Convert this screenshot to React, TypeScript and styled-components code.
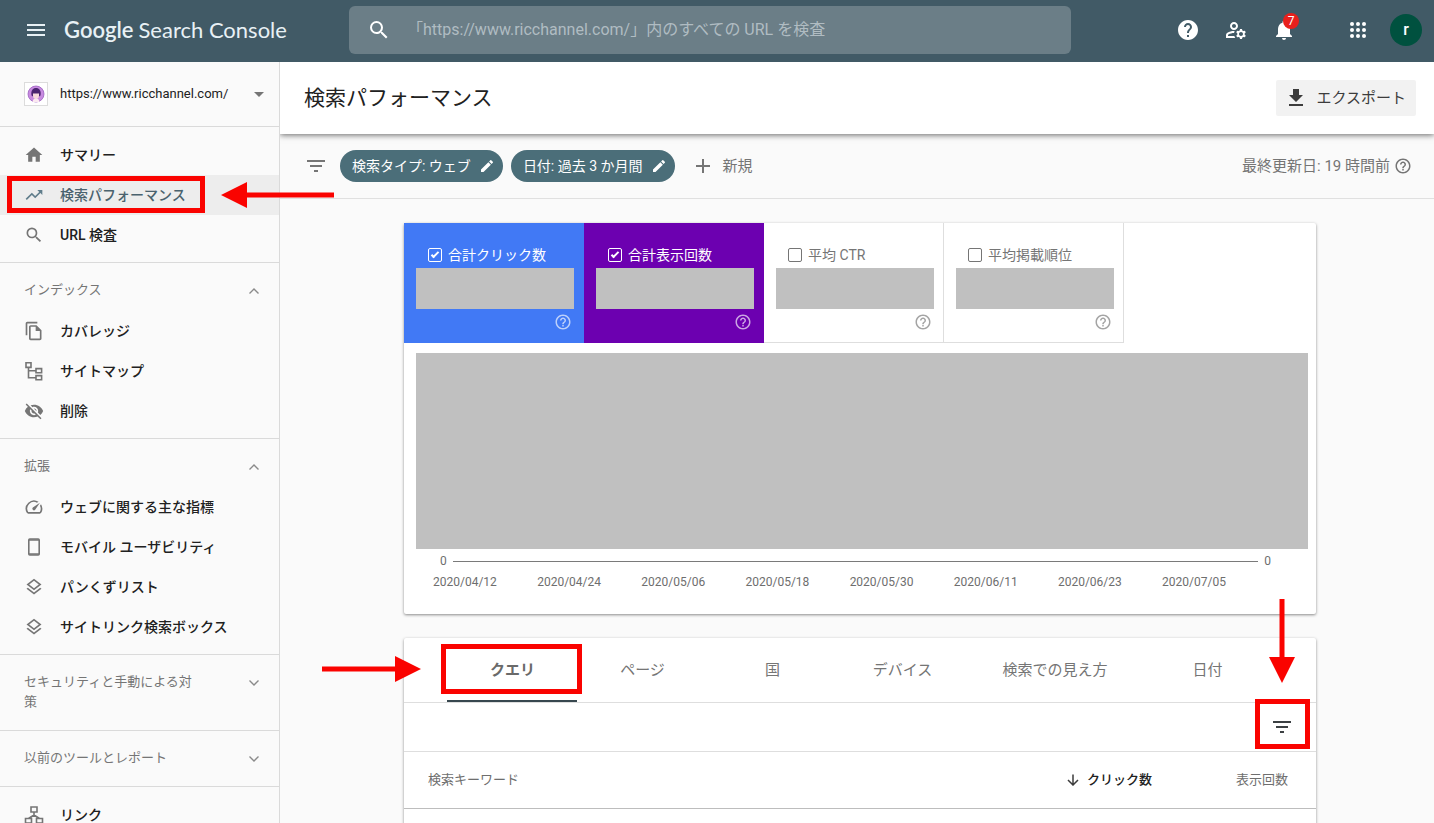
import React from "react";
import styled, { createGlobalStyle, css } from "styled-components";
import {
  MdAdd,
  MdArrowDropDown,
  MdEdit,
  MdFileDownload,
  MdFilterList,
  MdHelp,
  MdHelpOutline,
  MdHome,
  MdMenu,
  MdNotifications,
  MdOutlineFileCopy,
  MdOutlineLayers,
  MdOutlineManageAccounts,
  MdOutlineSpeed,
  MdSearch,
  MdTrendingUp,
  MdVisibilityOff,
} from "react-icons/md";

const GlobalStyle = createGlobalStyle`
  *, *::before, *::after { box-sizing: border-box; }
  body {
    margin: 0;
    background: #fafafa;
    color: #212121;
    font-family: Roboto, "Noto Sans CJK JP", sans-serif;
    font-size: 14px;
    line-height: 20px;
  }
  button, input, select { font: inherit; color: inherit; }
  button { border: 0; background: none; padding: 0; cursor: pointer; }
  svg { display: block; flex: none; }
`;

const RED = "#fa0300";

/* ---------- shell ---------- */

const Shell = styled.div`
  display: flex;
  flex-direction: column;
  height: 100vh;
  overflow: hidden;
`;

const TopBar = styled.header`
  display: flex;
  align-items: center;
  flex: none;
  height: 62px;
  padding-bottom: 2px;
  background: #415a66;
  color: #fff;
`;

const Brand = styled.div`
  display: flex;
  align-items: center;
  flex: none;
  width: 349px;
  padding-left: 24px;
  gap: 16px;
  color: #e8f1f5;
`;

const MenuButton = styled.button`
  display: flex;
  color: inherit;
`;

const Logo = styled.a`
  display: flex;
  align-items: baseline;
  gap: 5px;
  color: inherit;
  text-decoration: none;
  font-family: Lato, sans-serif;
  font-size: 22px;
  line-height: 32px;
  white-space: nowrap;
`;

const LogoStrong = styled.span`
  font-weight: 600;
`;

const SearchForm = styled.form`
  display: flex;
  align-items: center;
  flex: 1;
  height: 48px;
  padding: 0 18px;
  gap: 16px;
  border-radius: 6px;
  background: #6b7e87;
`;

const SearchInput = styled.input`
  flex: 1;
  min-width: 0;
  height: 40px;
  border: 0;
  padding: 0 0 2px;
  outline: 0;
  background: transparent;
  font-size: 16px;
  &::placeholder { color: #b0bcc2; opacity: 1; }
`;

const Tools = styled.div`
  display: flex;
  align-items: center;
  justify-content: flex-end;
  flex: none;
  width: 363px;
  padding-right: 12px;
  gap: 8px;
`;

const IconButton = styled.button<{ $dark?: boolean }>`
  position: relative;
  display: flex;
  align-items: center;
  justify-content: center;
  width: 40px;
  height: 40px;
  color: ${(p) => (p.$dark ? "#3c4043" : "#fff")};
`;

const Badge = styled.span`
  position: absolute;
  top: 3px;
  right: 5px;
  width: 16px;
  height: 16px;
  border-radius: 8px;
  background: #e8201c;
  font-size: 12px;
  line-height: 16px;
  text-align: center;
`;

const Account = styled.div`
  display: flex;
  align-items: center;
  gap: 12px;
  margin-left: 26px;
`;

const Avatar = styled.button`
  width: 32px;
  height: 32px;
  border-radius: 50%;
  background: #00513f;
  color: #fff;
  font-size: 16px;
  font-weight: 500;
`;

const Body = styled.div`
  position: relative;
  display: flex;
  flex: 1;
  min-height: 0;
`;

/* ---------- side navigation ---------- */

const Sidebar = styled.nav`
  flex: none;
  width: 280px;
  overflow-y: auto;
  scrollbar-width: none;
  border-right: 1px solid #dadada;
  background: #fafafa;
`;

const Property = styled.label`
  position: relative;
  display: flex;
  align-items: center;
  height: 65px;
  padding: 0 8px 0 24px;
  gap: 12px;
  border-bottom: 1px solid #dadada;
`;

const Favicon = styled.span`
  display: flex;
  align-items: center;
  justify-content: center;
  width: 24px;
  height: 24px;
  border: 1px solid #dcdcdc;
  background: #fff;
`;

const PropertySelect = styled.select`
  flex: 1;
  min-width: 0;
  appearance: none;
  border: 0;
  padding: 0;
  background: transparent;
  font-size: 13px;
`;

const Group = styled.section`
  padding: 8px 0 7px;
  border-bottom: 1px solid #dadada;
`;

const FoldGroup = styled.section<{ $open: boolean }>`
  padding-bottom: ${(p) => (p.$open ? 7 : 0)}px;
  border-bottom: 1px solid #dadada;
`;

const FoldButton = styled.button<{ $open: boolean }>`
  display: flex;
  align-items: flex-start;
  justify-content: space-between;
  width: 100%;
  padding: ${(p) => (p.$open ? "17px 19px 11px 24px" : "17px 19px 18px 24px")};
  color: #757575;
  font-size: 13px;
  line-height: 20px;
  text-align: left;
`;

const FoldLabel = styled.span`
  width: 170px;
`;

const Chevron = styled.svg`
  margin-top: 5px;
`;

const NavLink = styled.a<{ $active?: boolean }>`
  position: relative;
  display: flex;
  align-items: center;
  height: 40px;
  padding-left: 24px;
  gap: 16px;
  color: #212121;
  font-weight: 500;
  text-decoration: none;
  svg { color: #757575; }
  ${(p) =>
    p.$active &&
    css`
      background: #ededed;
      color: #4a626e;
      svg { color: #607d8b; }
    `}
`;

/* ---------- main column ---------- */

const Main = styled.main`
  display: flex;
  flex-direction: column;
  flex: 1;
  min-width: 0;
  overflow: hidden;
`;

const TitleBar = styled.div`
  position: relative;
  z-index: 1;
  display: flex;
  align-items: center;
  justify-content: space-between;
  flex: none;
  height: 72px;
  padding: 0 18px 0 24px;
  background: #fff;
  box-shadow: 0 1px 6px rgba(0, 0, 0, 0.6);
`;

const Title = styled.h1`
  margin: 0;
  font-size: 21px;
  font-weight: 400;
  line-height: 28px;
`;

const ExportButton = styled.button`
  display: flex;
  align-items: center;
  height: 36px;
  padding: 0 10px 0 8px;
  gap: 8px;
  border-radius: 2px;
  background: #f2f2f2;
  color: #3c3c3c;
  font-size: 15px;
`;

const FilterBar = styled.div`
  display: flex;
  align-items: center;
  flex: none;
  height: 65px;
  padding: 0 22px 0 24px;
  gap: 8px;
  border-bottom: 1px solid #e0e0e0;
  color: #757575;
`;

const FilterMark = styled.span`
  margin-right: 4px;
`;

const Chip = styled.button`
  display: flex;
  align-items: center;
  height: 32px;
  padding: 0 8px 0 12px;
  gap: 8px;
  border-radius: 16px;
  background: #4b6e79;
  color: #fff;
  white-space: nowrap;
`;

const AddFilter = styled.button`
  display: flex;
  align-items: center;
  margin-left: 8px;
  gap: 8px;
  font-size: 15px;
  white-space: nowrap;
`;

const Updated = styled.span`
  display: flex;
  align-items: center;
  margin-left: auto;
  gap: 4px;
  font-size: 15px;
  white-space: nowrap;
`;

const Content = styled.div`
  flex: 1;
  min-height: 0;
  padding: 24px 118px 24px 124px;
  overflow-y: auto;
  scrollbar-width: none;
`;

const Card = styled.section`
  margin-bottom: 24px;
  border-radius: 2px;
  background: #fff;
  box-shadow: 0 1px 3px rgba(0, 0, 0, 0.45);
`;

/* ---------- performance card ---------- */

const Metrics = styled.div`
  display: flex;
`;

const Metric = styled.div<{ $tone?: string }>`
  display: flex;
  flex-direction: column;
  width: 180px;
  height: 120px;
  padding: 22px 12px 0;
  color: #757575;
  ${(p) =>
    p.$tone
      ? css`
          background: ${p.$tone};
          color: #fff;
        `
      : css`
          box-shadow: inset -1px -1px 0 #dedede;
        `}
`;

const MetricLabel = styled.label`
  display: flex;
  align-items: center;
  height: 20px;
  padding-left: 12px;
  gap: 6px;
`;

const Tick = styled.input`
  position: relative;
  appearance: none;
  width: 14px;
  height: 14px;
  margin: 0;
  border: 1px solid currentColor;
  border-radius: 2px;
  &:checked::after {
    content: "";
    position: absolute;
    left: 4px;
    top: 1px;
    width: 4px;
    height: 8px;
    border: solid currentColor;
    border-width: 0 2px 2px 0;
    transform: rotate(45deg);
  }
`;

const Mask = styled.div`
  flex: none;
  height: 41px;
  margin: 3px -2px 4px 0;
  background: #c0c0c0;
`;

const MetricHelp = styled.button`
  align-self: flex-end;
  opacity: 0.65;
`;

const Chart = styled.div`
  padding: 10px 8px 22px 12px;
  color: #6e6e6e;
  font-size: 12px;
`;

const ChartMask = styled.div`
  height: 196px;
  background: #c0c0c0;
`;

const Axis = styled.div`
  display: flex;
  align-items: center;
  height: 24px;
  padding: 0 37px 0 24px;
  gap: 6px;
`;

const AxisLine = styled.span`
  flex: 1;
  height: 1px;
  background: #7a7a7a;
`;

const Dates = styled.div`
  display: flex;
  justify-content: space-between;
  padding: 0 82px 0 17px;
  line-height: 19px;
`;

/* ---------- dimension table ---------- */

const Tabs = styled.div`
  display: flex;
  justify-content: center;
  height: 65px;
  border-bottom: 1px solid #dedede;
`;

const Tab = styled.button<{ $active?: boolean }>`
  position: relative;
  min-width: 130px;
  height: 64px;
  padding: 0 35px;
  color: #757575;
  font-size: 15px;
  white-space: nowrap;
  ${(p) =>
    p.$active &&
    css`
      color: #6a6a6a;
      font-weight: 700;
      box-shadow: inset 0 -2px 0 #37474f;
    `}
`;

const TableTools = styled.div`
  display: flex;
  align-items: center;
  justify-content: flex-end;
  height: 49px;
  padding-right: 14px;
  border-bottom: 1px solid #dedede;
`;

const TableArea = styled.div`
  padding-bottom: 48px;
`;

const Table = styled.table`
  width: 100%;
  border-spacing: 0;
`;

const Th = styled.th<{ $end?: boolean; $sorted?: boolean }>`
  height: 57px;
  width: ${(p) => (p.$end ? "136px" : "auto")};
  padding: 0 ${(p) => (p.$end ? 28 : 24)}px 0 ${(p) => (p.$end ? 0 : 24)}px;
  border-bottom: 1px solid #bdbdbd;
  color: ${(p) => (p.$sorted ? "#212121" : "#6e6e6e")};
  font-size: 13px;
  font-weight: ${(p) => (p.$sorted ? 500 : 400)};
  text-align: ${(p) => (p.$end ? "right" : "left")};
  white-space: nowrap;
`;

const SortButton = styled.button`
  display: inline-flex;
  align-items: center;
  gap: 8px;
  font-weight: inherit;
  vertical-align: middle;
`;

/* ---------- annotations laid over the page ---------- */

const Outline = styled.span<{ $top: number; $left: number; $w: number; $h: number }>`
  position: absolute;
  z-index: 2;
  top: ${(p) => p.$top}px;
  left: ${(p) => p.$left}px;
  width: ${(p) => p.$w}px;
  height: ${(p) => p.$h}px;
  border: 5px solid ${RED};
  pointer-events: none;
`;

const Pointer = styled.svg<{ $top: number; $left: number }>`
  position: absolute;
  z-index: 3;
  top: ${(p) => p.$top}px;
  left: ${(p) => p.$left}px;
  pointer-events: none;
  && { color: ${RED}; }
`;

/* ---------- drawings ---------- */

const Stroke = ({ children }: { children: React.ReactNode }) => (
  <svg width="20" height="20" viewBox="0 0 20 20" fill="none" stroke="currentColor" strokeWidth="1.6" aria-hidden="true">
    {children}
  </svg>
);

const SitemapIcon = () => (
  <Stroke>
    <path d="M2 1.8h5v4.6H2zM12 7.6h5.6v4.2H12zM12 14.600h5.600v4.200H12zM4.500 6.400v10.300H12M4.500 9.700H12" />
  </Stroke>
);

const PhoneIcon = () => (
  <Stroke>
    <rect x="4.800" y="2" width="10.400" height="16" rx="1" />
    <path d="M5 3h10M5 17h10" />
  </Stroke>
);

const LinksIcon = () => (
  <Stroke>
    <path d="M7 2h6v5H7zM1.500 13.500h6V18h-6zM12.500 13.500h6V18h-6zM10 7v3.200M4.500 13.500L10 10l5.500 3.500" />
  </Stroke>
);

const AppsIcon = () => (
  <svg width="24" height="24" viewBox="0 0 24 24" fill="currentColor" aria-hidden="true">
    {[6, 12, 18].map((y) => [6, 12, 18].map((x) => <circle key={`${x}-${y}`} cx={x} cy={y} r="2" />))}
  </svg>
);

const FoldIcon = ({ open }: { open: boolean }) => (
  <Chevron width="12" height="12" viewBox="0 0 12 12" fill="none" stroke="#8a8a8a" strokeWidth="1.4" aria-hidden="true">
    <path d={open ? "M1.5 8.5L6 4l4.500 4.500" : "M1.500 3.500L6 8l4.500-4.500"} />
  </Chevron>
);

const SortDownIcon = () => (
  <svg width="12" height="12" viewBox="0 0 12 12" fill="none" stroke="#3c3c3c" strokeWidth="1.5" aria-hidden="true">
    <path d="M6 .5v10.300M1 6l5 5 5-5" />
  </svg>
);

const FaceIcon = () => (
  <svg width="18" height="18" viewBox="0 0 18 18" aria-hidden="true">
    <circle cx="9" cy="9" r="8" fill="#c88be0" stroke="#9a5fc0" strokeWidth=".8" />
    <path d="M4.500 10.500C3.500 5.500 6 3 9 3s5.500 2.500 4.500 7.500l-1.500 1H6z" fill="#4a2470" />
    <path d="M6 8.500h6v2.500c0 2-1.500 3-3 3s-3-1-3-3z" fill="#f7d9dc" />
    <path d="M5.500 17c.3-2.500 1.600-3.400 3.500-3.400s3.200.9 3.500 3.400z" fill="#fbe9f0" />
  </svg>
);

const indexLinks = [
  { label: "カバレッジ", icon: <MdOutlineFileCopy size={20} /> },
  { label: "サイトマップ", icon: <SitemapIcon /> },
  { label: "削除", icon: <MdVisibilityOff size={20} /> },
];

const enhancementLinks = [
  { label: "ウェブに関する主な指標", icon: <MdOutlineSpeed size={20} /> },
  { label: "モバイル ユーザビリティ", icon: <PhoneIcon /> },
  { label: "パンくずリスト", icon: <MdOutlineLayers size={20} /> },
  { label: "サイトリンク検索ボックス", icon: <MdOutlineLayers size={20} /> },
];

const metrics = [
  { label: "合計クリック数", tone: "#4179f5" },
  { label: "合計表示回数", tone: "#6c00b0" },
  { label: "平均 CTR" },
  { label: "平均掲載順位" },
];

const dates = [
  "2020/04/12",
  "2020/04/24",
  "2020/05/06",
  "2020/05/18",
  "2020/05/30",
  "2020/06/11",
  "2020/06/23",
  "2020/07/05",
];

const tabs = ["クエリ", "ページ", "国", "デバイス", "検索での見え方", "日付"];

type LinkItem = { label: string; icon: React.ReactNode };

function NavFold({ title, links }: { title: string; links?: LinkItem[] }) {
  const open = Boolean(links);
  return (
    <FoldGroup $open={open}>
      <FoldButton $open={open} aria-expanded={open}>
        <FoldLabel>{title}</FoldLabel>
        <FoldIcon open={open} />
      </FoldButton>
      {links?.map((l) => (
        <NavLink key={l.label} href="#">
          {l.icon}
          {l.label}
        </NavLink>
      ))}
    </FoldGroup>
  );
}

export default function App() {
  return (
    <>
      <GlobalStyle />
      <Shell>
        <TopBar>
          <Brand>
            <MenuButton aria-label="メニュー">
              <MdMenu size={24} />
            </MenuButton>
            <Logo href="#">
              <LogoStrong>Google</LogoStrong>
              <span>Search Console</span>
            </Logo>
          </Brand>
          <SearchForm role="search">
            <MdSearch size={24} />
            <SearchInput
              type="text"
              aria-label="URL 検査"
              placeholder="「https://www.ricchannel.com/」内のすべての URL を検査"
            />
          </SearchForm>
          <Tools>
            <IconButton aria-label="ヘルプ">
              <MdHelp size={24} />
            </IconButton>
            <IconButton aria-label="ユーザー設定">
              <MdOutlineManageAccounts size={24} />
            </IconButton>
            <IconButton aria-label="通知">
              <MdNotifications size={24} />
              <Badge>7</Badge>
            </IconButton>
            <Account>
              <IconButton aria-label="アプリ">
                <AppsIcon />
              </IconButton>
              <Avatar>r</Avatar>
            </Account>
          </Tools>
        </TopBar>

        <Body>
          <Sidebar>
            <Property>
              <Favicon>
                <FaceIcon />
              </Favicon>
              <PropertySelect aria-label="プロパティ">
                <option>https://www.ricchannel.com/</option>
              </PropertySelect>
              <MdArrowDropDown size={24} color="#757575" />
            </Property>
            <Group>
              <NavLink href="#">
                <MdHome size={20} />
                サマリー
              </NavLink>
              <NavLink href="#" $active>
                <MdTrendingUp size={20} />
                検索パフォーマンス
                <Outline $top={1} $left={7} $w={198} $h={37} />
              </NavLink>
              <NavLink href="#">
                <MdSearch size={20} />
                URL 検査
              </NavLink>
            </Group>
            <NavFold title="インデックス" links={indexLinks} />
            <NavFold title="拡張" links={enhancementLinks} />
            <NavFold title="セキュリティと手動による対策" />
            <NavFold title="以前のツールとレポート" />
            <Group>
              <NavLink href="#">
                <LinksIcon />
                リンク
              </NavLink>
            </Group>
          </Sidebar>
          <Pointer $top={120} $left={221} width="113" height="26" viewBox="0 0 113 26" fill="currentColor">
            <path d="M0 13L26 0v10.500h87v5H26V26z" />
          </Pointer>

          <Main>
            <TitleBar>
              <Title>検索パフォーマンス</Title>
              <ExportButton>
                <MdFileDownload size={24} />
                エクスポート
              </ExportButton>
            </TitleBar>
            <FilterBar>
              <FilterMark>
                <MdFilterList size={24} />
              </FilterMark>
              <Chip>
                検索タイプ: ウェブ
                <MdEdit size={16} />
              </Chip>
              <Chip>
                日付: 過去 3 か月間
                <MdEdit size={16} />
              </Chip>
              <AddFilter>
                <MdAdd size={24} />
                新規
              </AddFilter>
              <Updated>
                最終更新日: 19 時間前
                <MdHelpOutline size={18} />
              </Updated>
            </FilterBar>

            <Content>
              <Card>
                <Metrics>
                  {metrics.map((m) => (
                    <Metric key={m.label} $tone={m.tone}>
                      <MetricLabel>
                        <Tick type="checkbox" defaultChecked={Boolean(m.tone)} />
                        {m.label}
                      </MetricLabel>
                      <Mask />
                      <MetricHelp aria-label={`${m.label}のヘルプ`}>
                        <MdHelpOutline size={18} />
                      </MetricHelp>
                    </Metric>
                  ))}
                </Metrics>
                <Chart>
                  <ChartMask />
                  <Axis>
                    <span>0</span>
                    <AxisLine />
                    <span>0</span>
                  </Axis>
                  <Dates>
                    {dates.map((d) => (
                      <span key={d}>{d}</span>
                    ))}
                  </Dates>
                </Chart>
              </Card>

              <Card>
                <Tabs role="tablist">
                  {tabs.map((t, i) => (
                    <Tab key={t} role="tab" aria-selected={i === 0} $active={i === 0}>
                      {t}
                      {i === 0 && (
                        <>
                          <Outline $top={6} $left={-6} $w={141} $h={50} />
                          <Pointer $top={18} $left={-125} width="99" height="26" viewBox="0 0 99 26" fill="currentColor">
                            <path d="M99 13L73 0v10.500H0v5h73V26z" />
                          </Pointer>
                        </>
                      )}
                    </Tab>
                  ))}
                </Tabs>
                <TableTools>
                  <IconButton $dark aria-label="行をフィルタ">
                    <MdFilterList size={24} />
                    <Outline $top={-8} $left={-7} $w={55} $h={50} />
                    <Pointer $top={-108} $left={7} width="26" height="84" viewBox="0 0 26 84" fill="currentColor">
                      <path d="M13 84L0 58h10.500V0h5v58H26z" />
                    </Pointer>
                  </IconButton>
                </TableTools>
                <TableArea>
                  <Table>
                    <thead>
                      <tr>
                        <Th>検索キーワード</Th>
                        <Th $end $sorted aria-sort="descending">
                          <SortButton>
                            <SortDownIcon />
                            クリック数
                          </SortButton>
                        </Th>
                        <Th $end>表示回数</Th>
                      </tr>
                    </thead>
                  </Table>
                </TableArea>
              </Card>
            </Content>
          </Main>
        </Body>
      </Shell>
    </>
  );
}
